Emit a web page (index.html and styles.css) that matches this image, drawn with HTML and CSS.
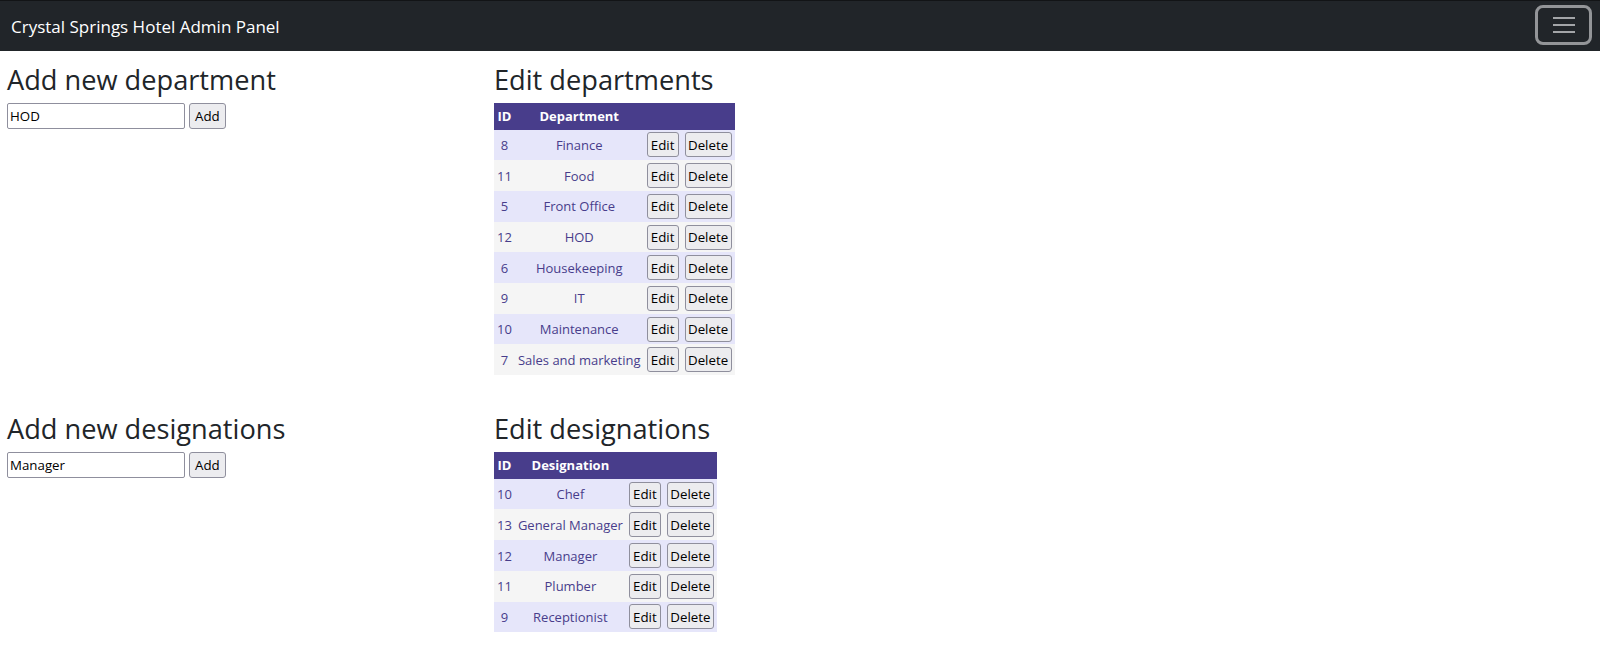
FILE: index.html
```html
<!DOCTYPE html>
<html lang="en">
<head>
<meta charset="utf-8">
<title>Crystal Springs Hotel Admin Panel</title>
<link rel="stylesheet" href="styles.css">
</head>
<body>
<nav class="navbar">
  <span class="brand">Crystal Springs Hotel Admin Panel</span>
  <button class="toggler" type="button" aria-label="Toggle navigation">
    <span class="toggler-icon"><i></i><i></i><i></i></span>
  </button>
</nav>

<main class="page">
  <section class="section">
    <div class="col-add">
      <h3 class="title">Add new department</h3>
      <form class="add-form">
        <input class="text-input" type="text" value="HOD">
        <button class="btn" type="button">Add</button>
      </form>
    </div>
    <div class="col-edit">
      <h3 class="title">Edit departments</h3>
      <table class="data-table">
        <thead>
          <tr><th>ID</th><th>Department</th><th></th><th></th></tr>
        </thead>
        <tbody>
          <tr><td>8</td><td>Finance</td><td><button class="btn btn-edit">Edit</button></td><td><button class="btn btn-del">Delete</button></td></tr>
          <tr><td>11</td><td>Food</td><td><button class="btn btn-edit">Edit</button></td><td><button class="btn btn-del">Delete</button></td></tr>
          <tr><td>5</td><td>Front Office</td><td><button class="btn btn-edit">Edit</button></td><td><button class="btn btn-del">Delete</button></td></tr>
          <tr><td>12</td><td>HOD</td><td><button class="btn btn-edit">Edit</button></td><td><button class="btn btn-del">Delete</button></td></tr>
          <tr><td>6</td><td>Housekeeping</td><td><button class="btn btn-edit">Edit</button></td><td><button class="btn btn-del">Delete</button></td></tr>
          <tr><td>9</td><td>IT</td><td><button class="btn btn-edit">Edit</button></td><td><button class="btn btn-del">Delete</button></td></tr>
          <tr><td>10</td><td>Maintenance</td><td><button class="btn btn-edit">Edit</button></td><td><button class="btn btn-del">Delete</button></td></tr>
          <tr><td>7</td><td>Sales and marketing</td><td><button class="btn btn-edit">Edit</button></td><td><button class="btn btn-del">Delete</button></td></tr>
        </tbody>
      </table>
    </div>
  </section>

  <section class="section section-second">
    <div class="col-add">
      <h3 class="title">Add new designations</h3>
      <form class="add-form">
        <input class="text-input" type="text" value="Manager">
        <button class="btn" type="button">Add</button>
      </form>
    </div>
    <div class="col-edit">
      <h3 class="title">Edit designations</h3>
      <table class="data-table">
        <thead>
          <tr><th>ID</th><th>Designation</th><th></th><th></th></tr>
        </thead>
        <tbody>
          <tr><td>10</td><td>Chef</td><td><button class="btn btn-edit">Edit</button></td><td><button class="btn btn-del">Delete</button></td></tr>
          <tr><td>13</td><td>General Manager</td><td><button class="btn btn-edit">Edit</button></td><td><button class="btn btn-del">Delete</button></td></tr>
          <tr><td>12</td><td>Manager</td><td><button class="btn btn-edit">Edit</button></td><td><button class="btn btn-del">Delete</button></td></tr>
          <tr><td>11</td><td>Plumber</td><td><button class="btn btn-edit">Edit</button></td><td><button class="btn btn-del">Delete</button></td></tr>
          <tr><td>9</td><td>Receptionist</td><td><button class="btn btn-edit">Edit</button></td><td><button class="btn btn-del">Delete</button></td></tr>
        </tbody>
      </table>
    </div>
  </section>
</main>
</body>
</html>
```

FILE: styles.css
```css
* { box-sizing: border-box; }

body {
  margin: 0;
  font-family: "Open Sans", "Noto Sans", sans-serif;
  color: #212529;
  background: #fff;
}

.navbar {
  display: flex;
  align-items: center;
  justify-content: space-between;
  height: 51px;
  border-top: 1px solid #121416;
  background: #212529;
  padding: 0 8px 0 11px;
}

.brand {
  color: #fff;
  font-size: 17px;
  line-height: 1;
}

.toggler {
  width: 57px;
  height: 40px;
  margin-top: -2px;
  padding: 0;
  display: flex;
  align-items: center;
  justify-content: center;
  background: transparent;
  border: 3px solid #939598;
  border-radius: 8px;
}

.toggler-icon {
  display: flex;
  flex-direction: column;
  gap: 5px;
  width: 22px;
}

.toggler-icon i {
  display: block;
  height: 2px;
  background: #a3a5a8;
}

.page {
  padding: 13px 0 0 7px;
}

.section {
  display: grid;
  grid-template-columns: 487px auto;
  align-items: start;
}

.section-second {
  margin-top: 38px;
}

.title {
  margin: 0 0 6px;
  font-size: 27.2px;
  font-weight: 400;
  line-height: 1.2;
}

.add-form {
  display: flex;
  gap: 4px;
  margin: 0;
}

.text-input {
  width: 178px;
  height: 26px;
  padding: 1px 2px;
  border: 1px solid #8f8f9d;
  border-radius: 2px;
  font-family: inherit;
  font-size: 13.3px;
  color: #000;
}

.btn {
  height: 26px;
  padding: 0 5px;
  border: 1px solid #8f8f9d;
  border-radius: 3px;
  background: #ececef;
  font-family: inherit;
  font-size: 13.3px;
  color: #000;
}

.data-table {
  border-collapse: collapse;
  font-size: 13px;
}

.data-table th {
  background: #483d8b;
  color: #fff;
  font-weight: 700;
  line-height: 21px;
  padding: 3px 3px;
  text-align: center;
}

.data-table td {
  color: #483d8b;
  line-height: 20px;
  padding: 2.85px 3px;
  text-align: center;
  vertical-align: middle;
}

.data-table tbody tr:nth-child(odd) { background: #e6e6fa; }
.data-table tbody tr:nth-child(even) { background: #f5f5f5; }

.data-table .btn {
  display: block;
  height: 25px;
  padding: 0;
}

.btn-edit { width: 32px; }
.btn-del { width: 47px; }
```
